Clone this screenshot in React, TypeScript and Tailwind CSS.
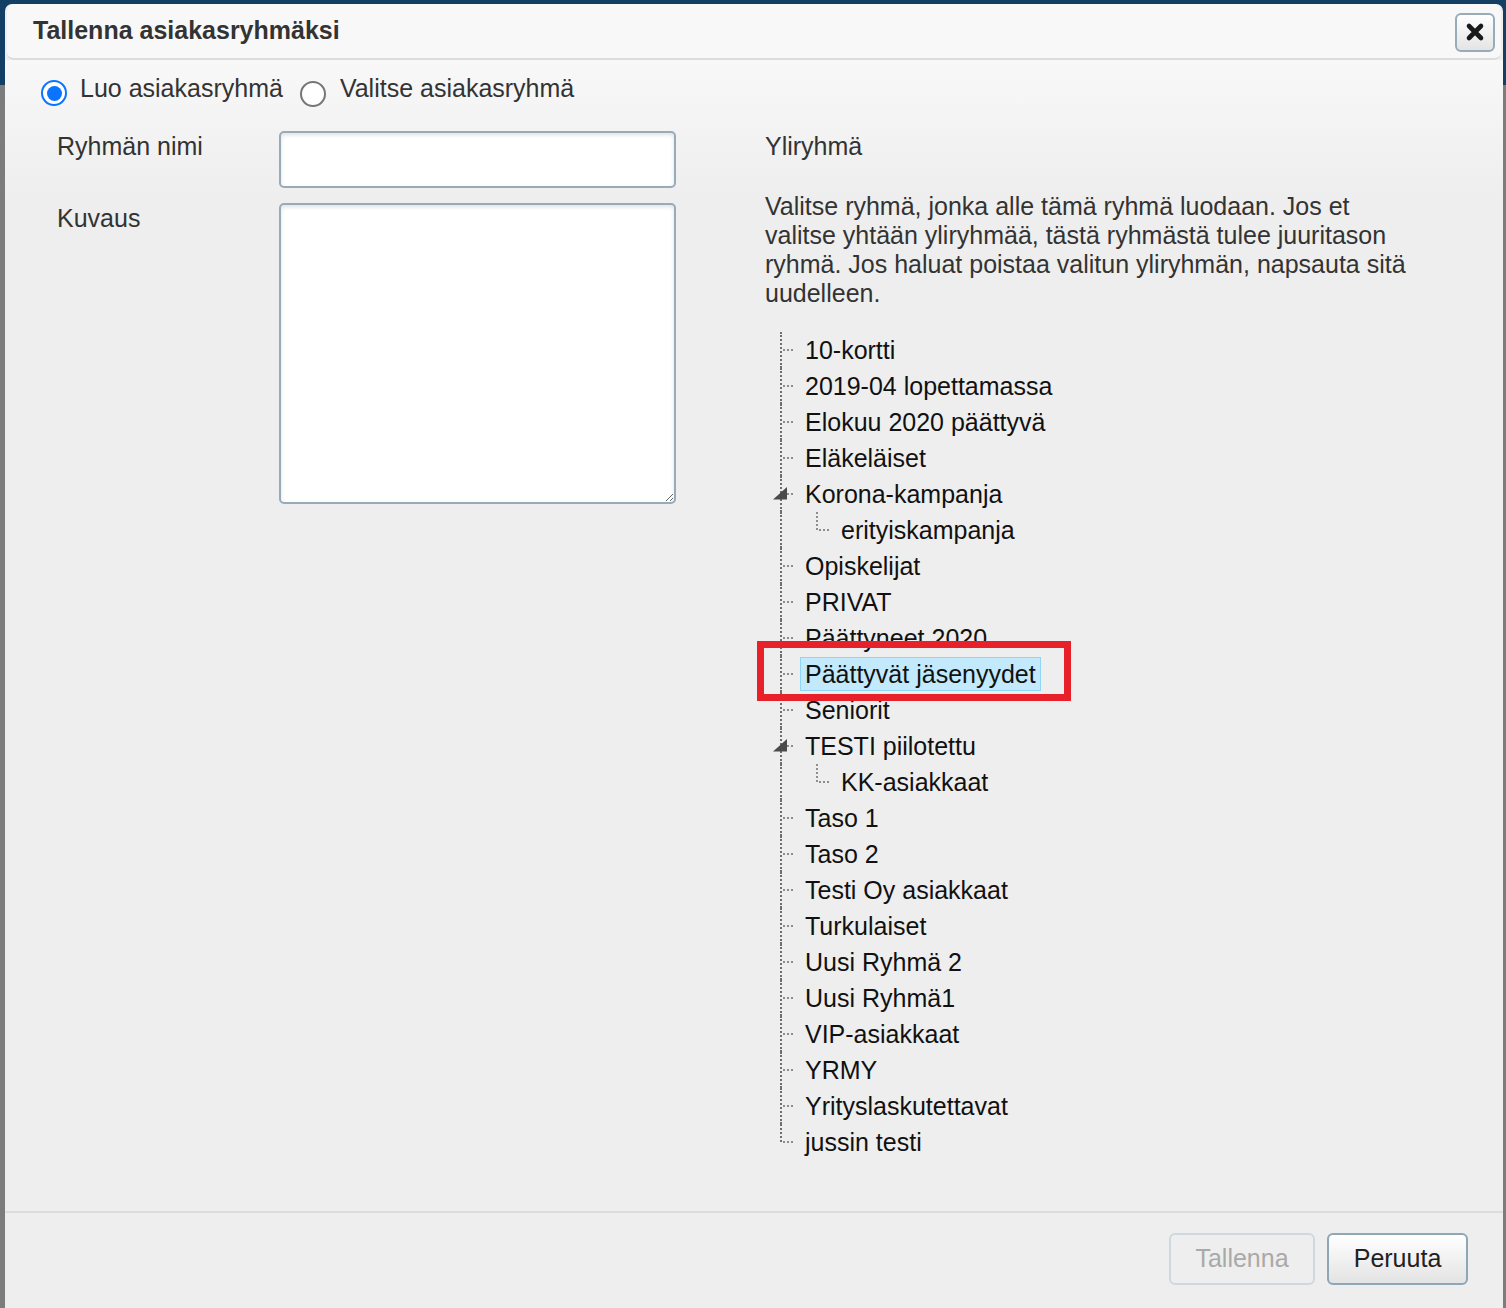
import React from "react";

type Item = { label: string; level: 0 | 1; open?: boolean; selected?: boolean; last?: boolean };

const items: Item[] = [
  { label: "10-kortti", level: 0 },
  { label: "2019-04 lopettamassa", level: 0 },
  { label: "Elokuu 2020 päättyvä", level: 0 },
  { label: "Eläkeläiset", level: 0 },
  { label: "Korona-kampanja", level: 0, open: true },
  { label: "erityiskampanja", level: 1 },
  { label: "Opiskelijat", level: 0 },
  { label: "PRIVAT", level: 0 },
  { label: "Päättyneet 2020", level: 0 },
  { label: "Päättyvät jäsenyydet", level: 0, selected: true },
  { label: "Seniorit", level: 0 },
  { label: "TESTI piilotettu", level: 0, open: true },
  { label: "KK-asiakkaat", level: 1 },
  { label: "Taso 1", level: 0 },
  { label: "Taso 2", level: 0 },
  { label: "Testi Oy asiakkaat", level: 0 },
  { label: "Turkulaiset", level: 0 },
  { label: "Uusi Ryhmä 2", level: 0 },
  { label: "Uusi Ryhmä1", level: 0 },
  { label: "VIP-asiakkaat", level: 0 },
  { label: "YRMY", level: 0 },
  { label: "Yrityslaskutettavat", level: 0 },
  { label: "jussin testi", level: 0, last: true },
];

function TreeRow({ item }: { item: Item }) {
  return (
    <div className={`relative h-[36px] flex items-center ${item.level === 1 ? "pl-[66px]" : "pl-[30px]"}`}>
      <div
        className={`absolute left-[10px] top-0 w-0 border-l-2 border-dotted border-[#6e6e6e] ${item.last ? "h-[18px]" : "h-[36px]"}`}
      />
      {item.level === 0 ? (
        <div className="absolute left-[13px] top-[17px] w-[10px] h-0 border-t-2 border-dotted border-[#8e8e8e]" />
      ) : (
        <>
          <div className="absolute left-[46px] top-0 h-[18px] w-0 border-l-2 border-dotted border-[#8e8e8e]" />
          <div className="absolute left-[49px] top-[17px] w-[10px] h-0 border-t-2 border-dotted border-[#8e8e8e]" />
        </>
      )}
      {item.open && (
        <svg className="absolute left-[3px] top-[11px]" width="15" height="13" viewBox="0 0 15 13">
          <polygon points="0,12.5 14,12.5 14,0" fill="#4a4a4a" />
        </svg>
      )}
      <span
        className={`h-[34px] flex items-center px-[4px] border whitespace-nowrap ${
          item.selected ? "bg-[#c3eafc] border-[#8fd5f6]" : "border-transparent"
        }`}
      >
        {item.label}
      </span>
      {item.selected && (
        <div className="absolute z-10 left-[-13px] top-[-15px] w-[314px] h-[60px] border-[7px] border-[#e8202a] pointer-events-none" />
      )}
    </div>
  );
}

function Radio({ checked }: { checked?: boolean }) {
  return checked ? (
    <span className="mt-[6px] w-[26px] h-[26px] rounded-full border-[2.5px] border-[#0b74ff] bg-white flex items-center justify-center shrink-0">
      <span className="w-[15px] h-[15px] rounded-full bg-[#0b74ff]" />
    </span>
  ) : (
    <span className="mt-[7px] w-[26px] h-[26px] rounded-full border-2 border-[#767676] bg-white shrink-0" />
  );
}

export default function App() {
  return (
    <div
      className="w-[1506px] h-[1308px] overflow-hidden pt-[4px] pl-[5px] pr-[3px] bg-[linear-gradient(#123f63_0,#123f63_85px,#7c7c7c_85px)]"
      style={{ fontFamily: '"Liberation Sans", Arial, sans-serif' }}
    >
      <div className="w-[1498px] h-[1304px] rounded-t-[7px] bg-[#eeeeee] flex flex-col overflow-hidden">
        {/* title bar */}
        <div className="h-[56px] shrink-0 mx-[2px] rounded-[7px] bg-[#f8f8f8] border-b-2 border-[#dcdcdc] flex items-center justify-between pl-[26px] pr-[6px]">
          <span className="text-[25px] font-bold text-[#333333]">Tallenna asiakasryhmäksi</span>
          <button className="w-[40px] h-[39px] mt-[2px] rounded-[6px] border-2 border-[#98abb9] bg-[linear-gradient(#ffffff,#e4e4e4)] flex items-center justify-center">
            <svg width="20" height="20" viewBox="0 0 20 20">
              <path d="M4 4 L16 16 M16 4 L4 16" stroke="#1a1a1a" strokeWidth="4.6" strokeLinecap="round" />
            </svg>
          </button>
        </div>

        {/* content */}
        <div className="flex-1 bg-[linear-gradient(#f8f8f8,#eeeeee_140px)] pt-[14px] text-[25px] text-[#333333] leading-[29px]">
          <div className="flex items-start pl-[36px]">
            <Radio checked />
            <span className="ml-[13px]">Luo asiakasryhmä</span>
            <span className="ml-[17px] flex items-start">
              <Radio />
            </span>
            <span className="ml-[14px]">Valitse asiakasryhmä</span>
          </div>

          <div className="flex mt-[24px]">
            <div className="pl-[52px] w-[760px] shrink-0">
              <div className="grid grid-cols-[222px_397px] gap-y-[15px]">
                <span className="mt-[1px]">Ryhmän nimi</span>
                <input
                  className="h-[57px] rounded-[5px] border-2 border-[#98abb9] bg-white shadow-[inset_0_2px_4px_rgba(0,0,0,0.12)] outline-none"
                  type="text"
                />
                <span className="mt-[1px]">Kuvaus</span>
                <textarea className="h-[301px] rounded-[5px] border-2 border-[#98abb9] bg-white shadow-[inset_0_2px_4px_rgba(0,0,0,0.12)] outline-none resize-y" />
              </div>
            </div>

            <div className="flex-1">
              <div className="mt-[1px]">Yliryhmä</div>
              <p className="mt-[31px] w-[652px]">
                Valitse ryhmä, jonka alle tämä ryhmä luodaan. Jos et valitse yhtään yliryhmää, tästä ryhmästä tulee
                juuritason ryhmä. Jos haluat poistaa valitun yliryhmän, napsauta sitä uudelleen.
              </p>
              <div className="mt-[24px] ml-[5px] text-[#111111]">
                {items.map((it) => (
                  <TreeRow key={it.label} item={it} />
                ))}
              </div>
            </div>
          </div>
        </div>

        {/* footer */}
        <div className="h-[97px] shrink-0 border-t-2 border-[#dcdcdc] bg-[#eeeeee] flex justify-end items-start pt-[20px] pr-[35px] gap-[12px] text-[25px]">
          <button className="w-[146px] h-[52px] rounded-[6px] border-2 border-[#cfd8df] bg-[#eeeeee] text-[#a9a9a9]">
            Tallenna
          </button>
          <button className="w-[141px] h-[52px] rounded-[6px] border-2 border-[#8fa6b6] bg-[linear-gradient(#ffffff,#e3e3e3)] text-[#222222]">
            Peruuta
          </button>
        </div>
      </div>
    </div>
  );
}
